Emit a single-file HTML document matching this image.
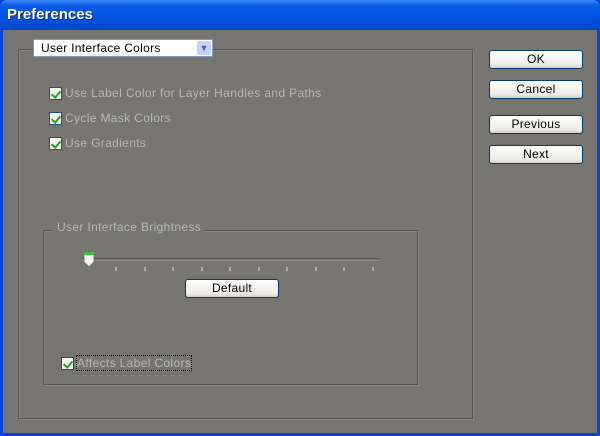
<!DOCTYPE html><html><head><style>
*{margin:0;padding:0;box-sizing:border-box}
body{width:600px;height:436px;overflow:hidden;position:relative;background:#0842d6;font-family:"Liberation Sans",sans-serif}
.tb{position:absolute;left:0;top:0;width:600px;height:30px;background:linear-gradient(#3a8cf8,#0a5ae8 20%,#0053e0 60%,#0046c8);border-radius:7px 7px 0 0}
.tb span{position:absolute;left:7px;top:6px;color:#fff;font-weight:bold;font-size:15px;text-shadow:1px 1px #0a2a80}
.cl{position:absolute;left:3px;top:30px;width:594px;height:403px;background:#767570}
.a{position:absolute}
.g{border:1px solid #55544f;box-shadow:inset 1px 1px #86857f,1px 1px #86857f}
.t{color:#b8b8b4;font-size:12px;position:absolute;white-space:nowrap;letter-spacing:0.35px}
.cb{position:absolute;width:13px;height:13px;background:#f4f4f0;border:1px solid #1c5180}
.cb:after{content:"";position:absolute;left:3px;top:1px;width:4px;height:7px;border:solid #21a121;border-width:0 2px 2px 0;transform:rotate(40deg)}
.btn{position:absolute;width:94px;height:19px;border:1px solid #003c74;border-radius:3px;background:linear-gradient(#fff,#ecebe6 80%,#d6d0c5);font-size:12px;text-align:center;line-height:17px;color:#000;letter-spacing:0.3px}
</style></head><body>
<div class="tb"><span>Preferences</span></div>
<div class="cl">
<div class="a g" style="left:15px;top:19px;width:455px;height:370px"></div>
<div class="a" style="left:30px;top:9px;width:180px;height:18px;background:#fff;border:1px solid #7f9db9;font-size:12px;line-height:16px;padding-left:7px;letter-spacing:0.3px">User Interface Colors
<div class="a" style="right:1px;top:1px;width:14px;height:14px;background:#c1d3fb;border-radius:2px;color:#4d6185;font-size:9px;line-height:14px;text-align:center;letter-spacing:0">&#9660;</div></div>
<div class="cb" style="left:46px;top:57px"></div><div class="t" style="left:62px;top:56px">Use Label Color for Layer Handles and Paths</div>
<div class="cb" style="left:46px;top:82px"></div><div class="t" style="left:62px;top:81px">Cycle Mask Colors</div>
<div class="cb" style="left:46px;top:107px"></div><div class="t" style="left:62px;top:106px">Use Gradients</div>
<div class="a g" style="left:40px;top:200px;width:375px;height:155px"></div>
<div class="t" style="left:50px;top:190px;background:#767570;padding:0 4px">User Interface Brightness</div>
<div class="a" style="left:79px;top:228px;width:298px;height:3px;border-top:1px solid #55544f;border-bottom:1px solid #8a8984"></div>
<svg class="a" style="left:78px;top:220px" width="305" height="22">
<path d="M3 2h10v10l-5 5l-5-5z" fill="#f4f4f0" stroke="#6f7a6f"/><rect x="3" y="2" width="10" height="3" fill="#3fbe3f"/>
<g stroke="#e0e0dc"><path d="M35 17v4M64 17v4M92 17v4M121 17v4M149 17v4M178 17v4M206 17v4M235 17v4M263 17v4M292 17v4"/></g></svg>
<div class="btn" style="left:182px;top:249px">Default</div>
<div class="cb" style="left:58px;top:327px"></div><div class="t" style="left:74px;top:326px;outline:1px dotted #000">Affects Label Colors</div>
<div class="btn" style="left:486px;top:20px">OK</div>
<div class="btn" style="left:486px;top:50px">Cancel</div>
<div class="btn" style="left:486px;top:85px">Previous</div>
<div class="btn" style="left:486px;top:115px">Next</div>
</div>
</body></html>
